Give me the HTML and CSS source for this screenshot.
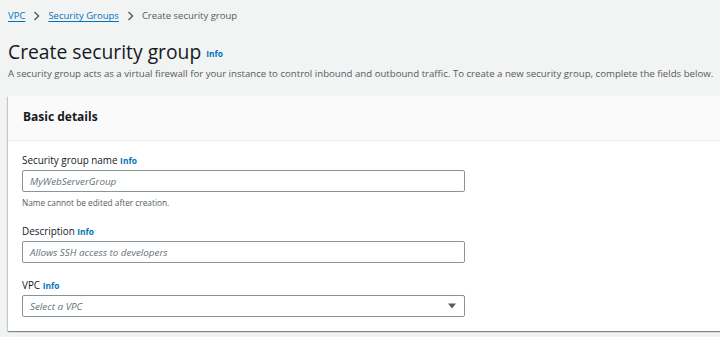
FILE: index.html
```html
<!DOCTYPE html>
<html>
<head>
<meta charset="utf-8">
<link rel="stylesheet" href="styles.css">
</head>
<body>
<nav class="crumbs">
  <a class="crumb-link" href="#">VPC</a>
  <svg class="chev" width="7" height="10" viewBox="0 0 7 10"><path d="M1.5 1 L5.5 5 L1.5 9" fill="none" stroke="#545b64" stroke-width="1.4"/></svg>
  <a class="crumb-link" href="#">Security Groups</a>
  <svg class="chev" width="7" height="10" viewBox="0 0 7 10"><path d="M1.5 1 L5.5 5 L1.5 9" fill="none" stroke="#545b64" stroke-width="1.4"/></svg>
  <span class="crumb-current">Create security group</span>
</nav>
<header class="page-head">
  <h1 class="title">Create security group <span class="info">Info</span></h1>
  <p class="desc">A security group acts as a virtual firewall for your instance to control inbound and outbound traffic. To create a new security group, complete the fields below.</p>
</header>
<section class="card">
  <div class="card-head"><h2 class="card-title">Basic details</h2></div>
  <div class="card-body">
    <div class="field">
      <label class="label">Security group name <span class="info-sm">Info</span></label>
      <div class="input"><span class="ph">MyWebServerGroup</span></div>
      <div class="hint">Name cannot be edited after creation.</div>
    </div>
    <div class="field">
      <label class="label">Description <span class="info-sm">Info</span></label>
      <div class="input"><span class="ph">Allows SSH access to developers</span></div>
    </div>
    <div class="field">
      <label class="label">VPC <span class="info-sm">Info</span></label>
      <div class="input select"><span class="ph">Select a VPC</span>
        <svg class="caret" width="8" height="6" viewBox="0 0 8 6"><path d="M0 0.5 H8 L4 5.5 Z" fill="#545b64"/></svg>
      </div>
    </div>
  </div>
</section>
</body>
</html>
```
FILE: styles.css
```css
* { box-sizing: border-box; }
html, body { margin: 0; padding: 0; }
body {
  background: #f2f3f3;
  font-family: "Open Sans", "Liberation Sans", sans-serif;
  color: #16191f;
  width: 720px;
  height: 337px;
  overflow: hidden;
}
.crumbs {
  display: flex;
  align-items: center;
  gap: 8px;
  padding: 0 8px;
  height: 31px;
  font-size: 9.5px;
}
.crumb-link { color: #0073bb; text-decoration: underline; text-underline-offset: 2px; }
.crumb-current { color: #545b64; }
.chev { display: block; }
.page-head { padding: 0 8px; }
.title {
  margin: 8px 0 0 0;
  font-size: 19.3px;
  font-weight: 400;
  line-height: 26px;
  color: #16191f;
}
.info { font-size: 8.3px; font-weight: 700; color: #0073bb; vertical-align: middle; margin-left: 0; }
.desc {
  margin: 0;
  font-size: 9.65px;
  line-height: 14px;
  color: #545b64;
  white-space: nowrap;
}
.card {
  margin: 15px 0 0 8px;
  width: 740px;
  background: #fff;
  box-shadow: 0 1px 1px 0 rgba(0,28,36,0.3), 1px 1px 1px 0 rgba(0,28,36,0.15), -1px 1px 1px 0 rgba(0,28,36,0.15);
}
.card-head {
  background: #fafafa;
  border-bottom: 1px solid #eaeded;
  height: 45px;
  padding: 0 15px 2px 15px;
  display: flex;
  align-items: center;
}
.card-title { margin: 0; font-size: 12px; font-weight: 700; color: #16191f; }
.card-body { padding: 12px 14px 14px 14px; display: flex; flex-direction: column; gap: 15px; }
.label { display: block; font-size: 9.9px; line-height: 14px; color: #16191f; margin-bottom: 2px; }
.info-sm { font-size: 8.4px; font-weight: 700; color: #0073bb; }
.input {
  width: 443px;
  height: 22px;
  border: 1px solid #879596;
  border-radius: 2px;
  display: flex;
  align-items: center;
  padding: 0 8px 0 7px;
  background: #fff;
}
.ph { font-size: 9.85px; font-style: italic; color: #687078; }
.select { justify-content: space-between; }
.caret { display: block; }
.hint { font-size: 8.3px; color: #545b64; margin: 5px 0 1px 0; line-height: 11px; }
```
